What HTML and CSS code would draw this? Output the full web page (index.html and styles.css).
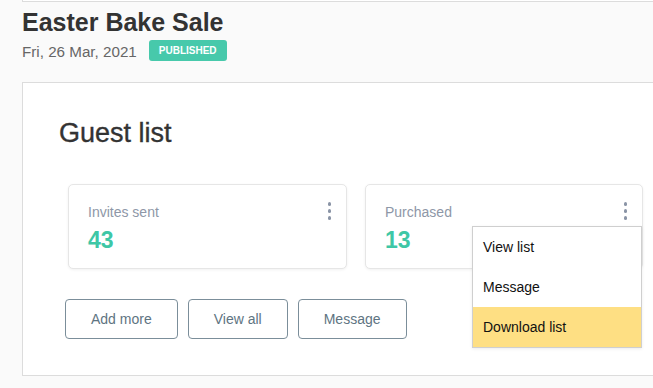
FILE: index.html
```html
<!DOCTYPE html>
<html>
<head>
<meta charset="utf-8">
<link rel="stylesheet" href="styles.css">
</head>
<body>
<div class="prev"></div>
<header class="header">
  <h1 class="title">Easter Bake Sale</h1>
  <div class="meta">
    <span class="date">Fri, 26 Mar, 2021</span>
    <span class="badge">PUBLISHED</span>
  </div>
</header>
<section class="panel">
  <h2 class="panel-title">Guest list</h2>
  <div class="cards">
    <div class="card">
      <div class="card-body">
        <div class="card-label">Invites sent</div>
        <div class="card-value">43</div>
      </div>
      <span class="kebab"><i></i><i></i><i></i></span>
    </div>
    <div class="card">
      <div class="card-body">
        <div class="card-label">Purchased</div>
        <div class="card-value">13</div>
      </div>
      <span class="kebab"><i></i><i></i><i></i></span>
      <ul class="menu">
        <li class="menu-item">View list</li>
        <li class="menu-item">Message</li>
        <li class="menu-item active">Download list</li>
      </ul>
    </div>
  </div>
  <div class="actions">
    <button class="btn">Add more</button>
    <button class="btn">View all</button>
    <button class="btn">Message</button>
  </div>
</section>
</body>
</html>
```

FILE: styles.css
```css
html, body {
  margin: 0;
  padding: 0;
}
body {
  background: #fafafa;
  font-family: "Liberation Sans", Arial, sans-serif;
  overflow: hidden;
  width: 653px;
  height: 388px;
}
.prev {
  height: 1px;
  margin-left: 22px;
  margin-right: -10px;
  background: #fff;
  border-left: 1px solid #dcdcdc;
  border-bottom: 1px solid #dcdcdc;
}
.header {
  padding: 6px 0 0 22px;
}
.title {
  margin: 0;
  font-size: 25px;
  line-height: 28px;
  font-weight: bold;
  color: #333;
}
.meta {
  display: flex;
  align-items: center;
  gap: 12px;
  margin-top: 4px;
  height: 21px;
}
.date {
  font-size: 15.2px;
  line-height: 21px;
  color: #666;
  position: relative;
  top: 1px;
}
.badge {
  display: inline-flex;
  align-items: center;
  height: 21px;
  padding: 0 10px;
  border-radius: 3px;
  background: #47c9ab;
  color: #fff;
  font-size: 10px;
  font-weight: bold;
}
.panel {
  margin: 21px -20px 0 22px;
  background: #fff;
  border: 1px solid #dcdcdc;
  padding: 35px 0 0 36px;
  box-sizing: border-box;
  height: 294px;
}
.panel-title {
  margin: 0;
  font-size: 27px;
  line-height: 31px;
  font-weight: normal;
  color: #333;
  -webkit-text-stroke: 0.35px #333;
}
.cards {
  display: flex;
  gap: 18px;
  margin: 35px 0 0 9px;
}
.card {
  position: relative;
  display: flex;
  justify-content: space-between;
  align-items: flex-start;
  width: 279px;
  height: 85px;
  box-sizing: border-box;
  border: 1px solid #e6e6e6;
  border-radius: 5px;
  background: #fff;
  box-shadow: 0 1px 3px rgba(0, 0, 0, 0.06);
  padding: 19px 15px 0 19px;
}
.card + .card {
  width: 278px;
}
.card-label {
  font-size: 14px;
  line-height: 16px;
  color: #8e97a7;
}
.card-value {
  margin-top: 7px;
  font-size: 23px;
  line-height: 26px;
  font-weight: bold;
  color: #3ec7a6;
}
.kebab {
  display: flex;
  flex-direction: column;
  gap: 3.5px;
  margin-top: -2px;
}
.kebab i {
  display: block;
  width: 3.5px;
  height: 3.5px;
  border-radius: 50%;
  background: #8a94a6;
}
.menu {
  position: absolute;
  top: 41px;
  right: 0;
  width: 170px;
  box-sizing: border-box;
  margin: 0;
  padding: 0;
  list-style: none;
  background: #fff;
  border: 1px solid #cfcfcf;
  box-shadow: 0 1px 3px rgba(0, 0, 0, 0.08);
  z-index: 2;
}
.menu-item {
  height: 40px;
  line-height: 40px;
  padding-left: 10px;
  font-size: 14px;
  color: #111;
}
.menu-item.active {
  background: #fedf83;
}
.actions {
  display: flex;
  gap: 10px;
  margin: 30px 0 0 6px;
}
.btn {
  height: 40px;
  padding: 0 25px;
  font-family: "Liberation Sans", Arial, sans-serif;
  font-size: 14px;
  color: #5e7482;
  background: #fff;
  border: 1px solid #7b8e9a;
  border-radius: 4px;
}
```
